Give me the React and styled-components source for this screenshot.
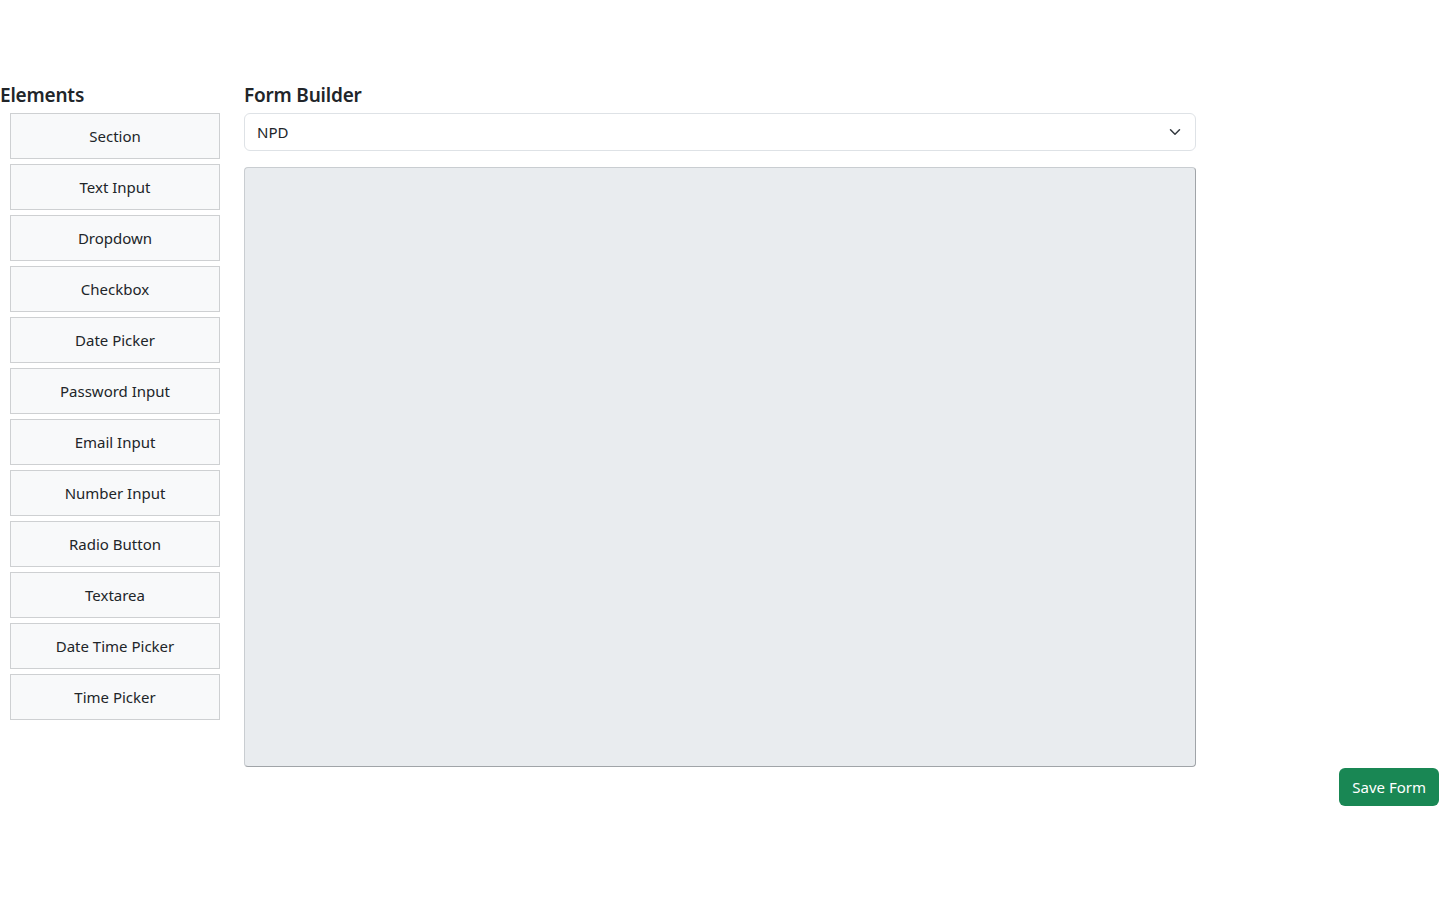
import React, { useState } from "react";
import styled, { createGlobalStyle } from "styled-components";

const GlobalStyle = createGlobalStyle`
  * { box-sizing: border-box; }
  body {
    margin: 0;
    background: #fff;
    color: #212529;
    font-family: "Noto Sans", "Open Sans", sans-serif;
    font-size: 15px;
  }
`;

const Page = styled.div`
  padding-top: 81px;
  width: 1440px;
`;

const Row = styled.div`
  display: flex;
  align-items: flex-start;
  gap: 24px;
`;

const Sidebar = styled.div`
  width: 220px;
  display: flex;
  flex-direction: column;
`;

const Heading = styled.h5`
  margin: 0 0 6px;
  padding-top: 2px;
  font-size: 19px;
  font-weight: 600;
  line-height: 24px;
  letter-spacing: -0.2px;
`;

const ElementList = styled.div`
  display: flex;
  flex-direction: column;
  gap: 5px;
  padding-left: 10px;
`;

const ElementButton = styled.button`
  height: 46px;
  width: 210px;
  background: #f8f9fa;
  border: 1px solid #ced0d2;
  border-radius: 0;
  font-family: inherit;
  font-size: 15px;
  color: #212529;
  cursor: grab;
`;

const Builder = styled.div`
  width: 952px;
  display: flex;
  flex-direction: column;
`;

const SelectWrap = styled.div`
  position: relative;
  height: 38px;
  margin-bottom: 16px;
`;

const Select = styled.select`
  appearance: none;
  width: 100%;
  height: 38px;
  padding: 0 36px 0 12px;
  border: 1px solid #dee2e6;
  border-radius: 6px;
  background: #fff;
  font-family: inherit;
  font-size: 15px;
  color: #212529;
`;

const Chevron = styled.svg`
  position: absolute;
  right: 15px;
  top: 13px;
  pointer-events: none;
`;

const Canvas = styled.div`
  height: 600px;
  background: #e9ecef;
  border: 1px solid #c9cdd1;
  border-right-color: #a0a4a8;
  border-bottom-color: #a0a4a8;
  border-radius: 4px;
`;

const Footer = styled.div`
  display: flex;
  justify-content: flex-end;
  padding-right: 1px;
  margin-top: 1px;
`;

const SaveButton = styled.button`
  height: 38px;
  padding: 0 13px;
  background: #198754;
  color: #fff;
  border: none;
  border-radius: 6px;
  font-family: inherit;
  font-size: 15px;
  cursor: pointer;
`;

const elements = [
  "Section",
  "Text Input",
  "Dropdown",
  "Checkbox",
  "Date Picker",
  "Password Input",
  "Email Input",
  "Number Input",
  "Radio Button",
  "Textarea",
  "Date Time Picker",
  "Time Picker",
];

export default function App() {
  const [form, setForm] = useState("NPD");

  return (
    <>
      <GlobalStyle />
      <Page>
        <Row>
          <Sidebar>
            <Heading>Elements</Heading>
            <ElementList>
              {elements.map((el) => (
                <ElementButton key={el}>{el}</ElementButton>
              ))}
            </ElementList>
          </Sidebar>
          <Builder>
            <Heading>Form Builder</Heading>
            <SelectWrap>
              <Select value={form} onChange={(e) => setForm(e.target.value)}>
                <option>NPD</option>
              </Select>
              <Chevron width="12" height="12" viewBox="0 0 16 16">
                <path
                  d="M2 5l6 6 6-6"
                  fill="none"
                  stroke="#343a40"
                  strokeWidth="2"
                  strokeLinecap="round"
                  strokeLinejoin="round"
                />
              </Chevron>
            </SelectWrap>
            <Canvas />
          </Builder>
        </Row>
        <Footer>
          <SaveButton>Save Form</SaveButton>
        </Footer>
      </Page>
    </>
  );
}
